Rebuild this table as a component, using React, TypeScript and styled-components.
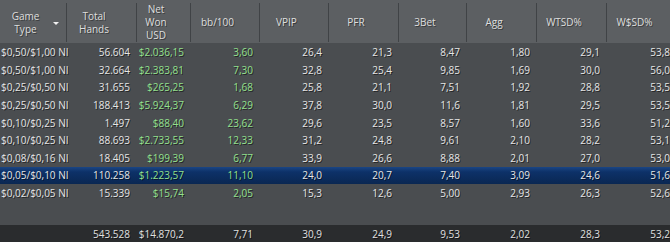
import React from "react";
import styled, { createGlobalStyle } from "styled-components";

const GlobalStyle = createGlobalStyle`
  html, body {
    margin: 0;
    padding: 0;
    background: #4a4d50;
  }
  body {
    font-family: "Open Sans", "Liberation Sans", sans-serif;
  }
`;

const columns = "67px 70px 54px 69px 69px 70px 68px 70px 70px 70px";

type Row = {
  game: string;
  hands: string;
  won: string;
  bb: string;
  vpip: string;
  pfr: string;
  threeBet: string;
  agg: string;
  wtsd: string;
  wssd: string;
  selected?: boolean;
};

const rows: Row[] = [
  { game: "$0,50/$1,00 NI", hands: "56.604", won: "$2.036,15", bb: "3,60", vpip: "26,4", pfr: "21,3", threeBet: "8,47", agg: "1,80", wtsd: "29,1", wssd: "53,8" },
  { game: "$0,50/$1,00 NI", hands: "32.664", won: "$2.383,81", bb: "7,30", vpip: "32,8", pfr: "25,4", threeBet: "9,85", agg: "1,69", wtsd: "30,0", wssd: "56,0" },
  { game: "$0,25/$0,50 NI", hands: "31.655", won: "$265,25", bb: "1,68", vpip: "25,8", pfr: "21,1", threeBet: "7,51", agg: "1,92", wtsd: "28,8", wssd: "53,5" },
  { game: "$0,25/$0,50 NI", hands: "188.413", won: "$5.924,37", bb: "6,29", vpip: "37,8", pfr: "30,0", threeBet: "11,6", agg: "1,81", wtsd: "29,5", wssd: "53,5" },
  { game: "$0,10/$0,25 NI", hands: "1.497", won: "$88,40", bb: "23,62", vpip: "29,6", pfr: "23,5", threeBet: "8,57", agg: "1,60", wtsd: "33,6", wssd: "51,2" },
  { game: "$0,10/$0,25 NI", hands: "88.693", won: "$2.733,55", bb: "12,33", vpip: "31,2", pfr: "24,8", threeBet: "9,61", agg: "2,10", wtsd: "28,2", wssd: "53,1" },
  { game: "$0,08/$0,16 NI", hands: "18.405", won: "$199,39", bb: "6,77", vpip: "33,9", pfr: "26,6", threeBet: "8,88", agg: "2,01", wtsd: "27,0", wssd: "53,0" },
  { game: "$0,05/$0,10 NI", hands: "110.258", won: "$1.223,57", bb: "11,10", vpip: "24,0", pfr: "20,7", threeBet: "7,40", agg: "3,09", wtsd: "24,6", wssd: "51,6", selected: true },
  { game: "$0,02/$0,05 NI", hands: "15.339", won: "$15,74", bb: "2,05", vpip: "15,3", pfr: "12,6", threeBet: "5,00", agg: "2,93", wtsd: "26,3", wssd: "52,6" },
];

const headers: { label: string[]; menu?: boolean }[] = [
  { label: ["Game", "Type"], menu: true },
  { label: ["Total", "Hands"] },
  { label: ["Net", "Won", "USD"] },
  { label: ["bb/100"] },
  { label: ["VPIP"] },
  { label: ["PFR"] },
  { label: ["3Bet"] },
  { label: ["Agg"] },
  { label: ["WTSD%"] },
  { label: ["W$SD%"] },
];

const App: React.FC = () => {
  return (
    <>
      <GlobalStyle />
      <Grid>
        <Header>
          {headers.map((h, i) => (
            <HeadCell key={i} $first={i === 0}>
              <HeadLabel>
                {h.label.map((l) => (
                  <span key={l}>{l}</span>
                ))}
              </HeadLabel>
              {h.menu && <MenuArrow />}
            </HeadCell>
          ))}
        </Header>
        <Body>
          {rows.map((r, i) => (
            <DataRow key={i} $selected={r.selected}>
              <GameCell>{r.game}</GameCell>
              <Cell>{r.hands}</Cell>
              <Cell $green>{r.won}</Cell>
              <Cell $green>{r.bb}</Cell>
              <Cell>{r.vpip}</Cell>
              <Cell>{r.pfr}</Cell>
              <Cell>{r.threeBet}</Cell>
              <Cell>{r.agg}</Cell>
              <Cell>{r.wtsd}</Cell>
              <Cell>{r.wssd}</Cell>
            </DataRow>
          ))}
        </Body>
        <Footer>
          <Cell />
          <Cell>543.528</Cell>
          <Cell>$14.870,2</Cell>
          <Cell>7,71</Cell>
          <Cell>30,9</Cell>
          <Cell>24,9</Cell>
          <Cell>9,53</Cell>
          <Cell>2,02</Cell>
          <Cell>28,3</Cell>
          <Cell>53,2</Cell>
        </Footer>
      </Grid>
    </>
  );
};

export default App;

const Grid = styled.div`
  width: 670px;
  height: 242px;
  overflow: hidden;
  display: flex;
  flex-direction: column;
  background: #4a4d50;
  font-size: 10px;
  color: #e6e6e6;
  text-shadow: 1px 1px 0 rgba(0, 0, 0, 0.55);
`;

const Header = styled.div`
  display: grid;
  grid-template-columns: ${columns};
  height: 43px;
  flex: none;
  background: #5c5f62;
`;

const HeadCell = styled.div<{ $first?: boolean }>`
  position: relative;
  display: flex;
  align-items: center;
  justify-content: center;
  padding-right: 15px;
  border-right: 1px solid #404346;
  margin: 3px 0;
  color: #dedede;
  text-shadow: 1px 1px 0 rgba(0, 0, 0, 0.4);
  &:last-child {
    border-right: none;
  }
`;

const HeadLabel = styled.div`
  display: flex;
  flex-direction: column;
  align-items: center;
  line-height: 13px;
`;

const MenuArrow = styled.span`
  position: absolute;
  right: 7px;
  top: 19px;
  width: 0;
  height: 0;
  border-left: 3px solid transparent;
  border-right: 3px solid transparent;
  border-top: 3px solid #f0f0f0;
`;

const Body = styled.div`
  flex: 1;
  padding-top: 0.5px;
`;

const DataRow = styled.div<{ $selected?: boolean }>`
  display: grid;
  grid-template-columns: ${columns};
  height: 17.6px;
  align-items: center;
  background: ${(p) =>
    p.$selected
      ? "linear-gradient(to bottom, #1a4584 0%, #0d3168 30%, #0a2752 100%)"
      : "transparent"};
`;

const Cell = styled.div<{ $green?: boolean }>`
  text-align: right;
  padding-right: 7px;
  white-space: nowrap;
  color: ${(p) => (p.$green ? "#93e08e" : "inherit")};
`;

const GameCell = styled.div`
  padding-left: 1px;
  white-space: nowrap;
`;

const Footer = styled.div`
  display: grid;
  grid-template-columns: ${columns};
  height: 17px;
  flex: none;
  align-items: center;
  background: #2a2c2e;
  color: #e0e0e0;
`;
